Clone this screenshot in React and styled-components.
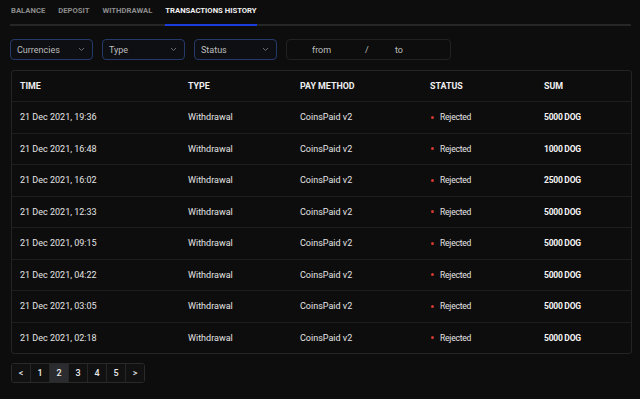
import React from "react";
import styled, { createGlobalStyle } from "styled-components";

const GlobalStyle = createGlobalStyle`
	html, body {
		margin: 0;
		padding: 0;
		background: #0d0d0d;
		font-family: Roboto, "Liberation Sans", sans-serif;
		color: #e6e6e6;
	}
	* { box-sizing: border-box; }
`;

const Page = styled.div`
	width: 640px;
	height: 399px;
	padding: 0 9px 0 10px;
	background: #0d0d0d;
	overflow: hidden;
`;

const Tabs = styled.div`
	display: flex;
	gap: 13px;
	border-bottom: 2px solid #262626;
	height: 26px;
	padding-left: 1px;
`;

const Tab = styled.div`
	height: 26px;
	padding: 6px 0 0;
	font-size: 7.7px;
	font-weight: 700;
	white-space: nowrap;
	color: ${(p) => (p.active ? "#f2f2f2" : "#8c8c8c")};
	border-bottom: 2px solid ${(p) => (p.active ? "#1a3ddb" : "transparent")};
	margin-bottom: -2px;
`;

const Filters = styled.div`
	display: flex;
	gap: 9px;
	margin-top: 13px;
`;

const Select = styled.div`
	width: 83px;
	height: 21px;
	border: 1px solid #253a6a;
	border-radius: 4px;
	display: flex;
	align-items: center;
	justify-content: space-between;
	padding: 0 7px 0 6px;
	font-size: 9px;
	color: #bdbdbd;
	background: #0e0f12;
`;

const DateRange = styled.div`
	width: 165px;
	height: 21px;
	border: 1px solid #222;
	border-radius: 4px;
	display: grid;
	grid-template-columns: 53px 30px 45px;
	align-items: center;
	padding-left: 25px;
	font-size: 9px;
	color: #bdbdbd;
`;

const Table = styled.div`
	margin-top: 10px;
	margin-left: 1px;
	width: 621px;
	border: 1px solid #242424;
	border-radius: 3px;
`;

const Row = styled.div`
	display: grid;
	grid-template-columns: 168px 112px 130px 114px 1fr;
	align-items: center;
	height: ${(p) => (p.head ? "30px" : "31.5px")};
	padding-left: 8px;
	border-top: ${(p) => (p.head ? "none" : "1px solid #1e1e1e")};
`;

const HeadCell = styled.div`
	font-size: 8.9px;
	font-weight: 700;
	color: #f0f0f0;
`;

const Cell = styled.div`
	font-size: 9px;
	color: #e4e4e4;
`;

const Status = styled.div`
	display: flex;
	align-items: center;
	gap: 6px;
	font-size: 8.5px;
	letter-spacing: -0.2px;
	color: #e6e6e6;
	padding-left: 1px;
`;

const Dot = styled.span`
	width: 3px;
	height: 3px;
	border-radius: 50%;
	background: #d23a2e;
`;

const Sum = styled.div`
	font-size: 8.5px;
	letter-spacing: -0.25px;
	font-weight: 700;
	color: #f5f5f5;
`;

const Pager = styled.div`
	display: inline-flex;
	margin-top: 9px;
	margin-left: 1px;
	border: 1px solid #2a2a2a;
	border-radius: 3px;
	overflow: hidden;
`;

const PageBtn = styled.div`
	width: ${(p) => (p.first ? "18px" : "19px")};
	height: 18px;
	display: flex;
	align-items: center;
	justify-content: center;
	font-size: 9px;
	font-weight: 500;
	color: #e8e8e8;
	background: ${(p) => (p.active ? "#2b2c30" : "#111")};
	border-left: ${(p) => (p.first ? "none" : "1px solid #262626")};
`;

const Chevron = () => (
	<svg width="7" height="5" viewBox="0 0 7 5">
		<path d="M1 1l2.5 2.5L6 1" stroke="#777" strokeWidth="0.9" fill="none" />
	</svg>
);

const rows = [
	["21 Dec 2021, 19:36", "5000 DOG"],
	["21 Dec 2021, 16:48", "1000 DOG"],
	["21 Dec 2021, 16:02", "2500 DOG"],
	["21 Dec 2021, 12:33", "5000 DOG"],
	["21 Dec 2021, 09:15", "5000 DOG"],
	["21 Dec 2021, 04:22", "5000 DOG"],
	["21 Dec 2021, 03:05", "5000 DOG"],
	["21 Dec 2021, 02:18", "5000 DOG"],
];

const App = () => (
	<Page>
		<GlobalStyle />
		<Tabs>
			<Tab>BALANCE</Tab>
			<Tab>DEPOSIT</Tab>
			<Tab>WITHDRAWAL</Tab>
			<Tab active>TRANSACTIONS HISTORY</Tab>
		</Tabs>
		<Filters>
			<Select>Currencies<Chevron /></Select>
			<Select>Type<Chevron /></Select>
			<Select>Status<Chevron /></Select>
			<DateRange>
				<span>from</span>
				<span>/</span>
				<span>to</span>
			</DateRange>
		</Filters>
		<Table>
			<Row head>
				<HeadCell>TIME</HeadCell>
				<HeadCell>TYPE</HeadCell>
				<HeadCell>PAY METHOD</HeadCell>
				<HeadCell>STATUS</HeadCell>
				<HeadCell>SUM</HeadCell>
			</Row>
			{rows.map(([time, sum]) => (
				<Row key={time}>
					<Cell>{time}</Cell>
					<Cell>Withdrawal</Cell>
					<Cell>CoinsPaid v2</Cell>
					<Status><Dot />Rejected</Status>
					<Sum>{sum}</Sum>
				</Row>
			))}
		</Table>
		<Pager>
			{["<", "1", "2", "3", "4", "5", ">"].map((p, i) => (
				<PageBtn key={p} first={i === 0} active={p === "2"}>{p}</PageBtn>
			))}
		</Pager>
	</Page>
);

export default App;
